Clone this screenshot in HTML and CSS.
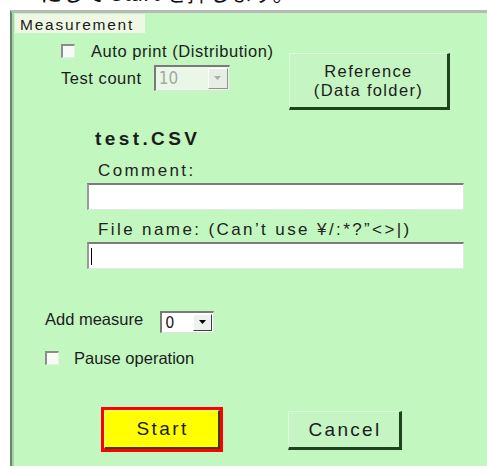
FILE: index.html
```html
<!DOCTYPE html>
<html>
<head>
<meta charset="utf-8">
<link rel="stylesheet" href="styles.css">
</head>
<body>
<div class="clip"><div class="cliptext">にして Start を押します。</div></div>
<div class="frame">
  <div class="legend">Measurement</div>
  <div class="top">
    <div class="topleft">
      <div class="chkrow"><span class="chk"></span><span class="t16">Auto print (Distribution)</span></div>
      <div class="countrow"><span class="t16">Test count</span>
        <span class="combo disabled"><span class="val">10</span><span class="arrow"><svg width="9" height="5" viewBox="0 0 9 5"><path d="M1 0h7L4.5 4z" fill="#a8b0a8"/></svg></span></span>
      </div>
    </div>
    <div class="btn refbtn">Reference<br>(Data folder)</div>
  </div>
  <div class="filebox">
    <div class="fname">test.CSV</div>
    <div class="lbl">Comment:</div>
    <div class="input"></div>
    <div class="lbl lbl2">File name: (Can’t use ¥/:*?”&lt;&gt;|)</div>
    <div class="input"><span class="caret"></span></div>
  </div>
  <div class="addrow"><span class="t16 addtxt">Add measure</span>
    <span class="combo small"><span class="val">0</span><span class="arrow"><svg width="9" height="5" viewBox="0 0 9 5"><path d="M1 0h7L4.5 4z" fill="#000"/></svg></span></span>
  </div>
  <div class="chkrow pause"><span class="chk"></span><span class="t16 plain">Pause operation</span></div>
  <div class="btnrow">
    <div class="startwrap"><div class="btn start">Start</div></div>
    <div class="btn cancel">Cancel</div>
  </div>
</div>
</body>
</html>
```
FILE: styles.css
```css
html, body {
  margin: 0;
  padding: 0;
  background: #ffffff;
  width: 487px;
  height: 466px;
  overflow: hidden;
  font-family: "Liberation Sans", Arial, "Noto Sans CJK JP", sans-serif;
  color: #1c1c1c;
}
.clip {
  height: 10px;
  overflow: hidden;
  padding-left: 40px;
}
.cliptext {
  margin-top: -21px;
  font-size: 22px;
  line-height: 24px;
  color: #111;
  white-space: nowrap;
  font-family: "Noto Sans CJK JP", sans-serif;
}
.frame {
  margin-left: 10px;
  height: 456px;
  background: #c2f7c0;
  border-top: 3px solid #b4bab4;
  border-left: 2px solid #6a846a;
  box-sizing: border-box;
  box-shadow: inset 2px 0 0 #a6d4a6;
}
.legend {
  margin: 1px 0 0 3px;
  padding: 2px 0 0 5px;
  width: 125px;
  height: 17px;
  background: #eff8e4;
  font-size: 15.5px;
  line-height: 17px;
  letter-spacing: 1.75px;
}
.t16 {
  font-size: 16.5px;
  line-height: 18px;
  letter-spacing: 0.55px;
}
.t16.addtxt, .t16.plain { letter-spacing: 0; }
.top {
  display: flex;
  align-items: flex-start;
  margin-top: 9px;
}
.topleft {
  padding-left: 49px;
  width: 228px;
}
.chkrow {
  display: flex;
  align-items: center;
  height: 18px;
}
.chk {
  width: 11px;
  height: 11px;
  background: #f7fbf5;
  border-top: 2px solid #8c8c8c;
  border-left: 2px solid #8c8c8c;
  border-right: 1px solid #e6eee6;
  border-bottom: 1px solid #e6eee6;
  margin-right: 16px;
  flex: none;
}
.countrow {
  display: flex;
  align-items: center;
  margin-top: 5px;
  gap: 12px;
}
.combo {
  display: flex;
  align-items: stretch;
  background: #fff;
  border-top: 2px solid #7a7a7a;
  border-left: 2px solid #7a7a7a;
  border-right: 1px solid #dde6dd;
  border-bottom: 1px solid #dde6dd;
  box-sizing: border-box;
  flex: none;
}
.combo .val {
  font-family: "Liberation Sans Narrow", "DejaVu Sans Condensed", "Liberation Sans", sans-serif;
  font-stretch: condensed;
  padding-left: 3px;
  flex: 1;
}
.combo.disabled {
  background: #e9f6e8;
  width: 76px;
  height: 26px;
}
.combo.disabled .val {
  color: #a3aaa3;
  font-size: 17px;
  line-height: 23px;
}
.combo .arrow {
  width: 18px;
  background: #eef2ee;
  border-right: 1px solid #404040;
  border-bottom: 1px solid #404040;
  border-top: 1px solid #fff;
  border-left: 1px solid #fff;
  box-sizing: border-box;
  display: flex;
  align-items: center;
  justify-content: center;
  margin: 1px;
}
.combo.disabled .arrow {
  width: 20px;
  border-right-color: #8e968e;
  border-bottom-color: #8e968e;
  background: #e6eee6;
}
.btn {
  background: #c4f5c2;
  border-top: 1px solid #dcfcdc;
  border-left: 1px solid #dcfcdc;
  border-right: 3px solid #1d441d;
  border-bottom: 3px solid #1d441d;
  box-sizing: border-box;
  text-align: center;
  display: flex;
  align-items: center;
  justify-content: center;
  color: #1c1c1c;
  flex: none;
}
.refbtn {
  margin-top: 11px;
  width: 161px;
  height: 57px;
  font-size: 16.5px;
  line-height: 19px;
  letter-spacing: 1.35px;
}
.filebox {
  margin-left: 75px;
  margin-top: 18px;
  width: 377px;
}
.fname {
  font-weight: bold;
  font-size: 19px;
  line-height: 22px;
  letter-spacing: 3.4px;
  padding-left: 8px;
}
.lbl {
  padding-left: 11px;
  font-size: 17px;
  line-height: 20px;
  letter-spacing: 2.4px;
  margin-top: 11px;
  color: #222;
  white-space: nowrap;
}
.lbl2 { margin-top: 10px; }
.input {
  height: 24px;
  background: #fff;
  border-top: 2px solid #7c7c7c;
  border-left: 2px solid #999;
  border-right: 1px solid #e2ebe2;
  border-bottom: 1px solid #e2ebe2;
  margin-top: 2px;
}
.caret {
  display: block;
  margin: 4px 0 0 2px;
  width: 1px;
  height: 17px;
  background: #000;
}
.addrow {
  display: flex;
  align-items: flex-start;
  margin: 41px 0 0 33px;
}
.addtxt { margin-right: 17px; }
.combo.small {
  width: 54px;
  height: 22px;
  margin-top: 1px;
}
.combo.small .val {
  font-size: 16px;
  line-height: 19px;
}
.combo.small .arrow { width: 19px; }
.pause {
  margin: 16px 0 0 33px;
}
.pause .chk { margin-right: 15px; }
.btnrow {
  display: flex;
  align-items: flex-start;
  margin: 40px 0 0 89px;
}
.startwrap {
  border: 3px solid #ff0000;
  width: 122px;
  height: 45px;
  box-sizing: border-box;
  flex: none;
}
.start {
  width: 100%;
  height: 100%;
  background: #ffff00;
  border-top: 1px solid #ffff90;
  border-left: 1px solid #ffff90;
  border-right: 2px solid #3c3c14;
  border-bottom: 2px solid #3c3c14;
  font-size: 19px;
  letter-spacing: 2.4px;
  padding-left: 2px;
}
.cancel {
  margin: 4px 0 0 65px;
  width: 114px;
  height: 39px;
  font-size: 19px;
  letter-spacing: 2.3px;
  padding-left: 2px;
}
```
